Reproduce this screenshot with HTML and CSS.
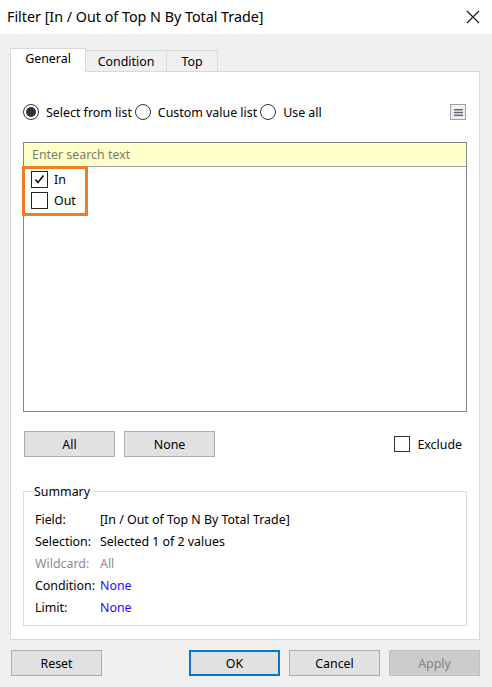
FILE: index.html
```html
<!DOCTYPE html>
<html>
<head>
<meta charset="utf-8">
<link rel="stylesheet" href="styles.css">
</head>
<body>
<div class="window">
  <div class="titlebar">
    <span class="title">Filter [In / Out of Top N By Total Trade]</span>
    <svg class="close" width="14" height="14" viewBox="0 0 14 14"><path d="M1 1L13 13M13 1L1 13" stroke="#111" stroke-width="1.1" fill="none"/></svg>
  </div>
  <div class="body">
    <div class="tabs">
      <div class="tab active">General</div>
      <div class="tab t2">Condition</div>
      <div class="tab t3">Top</div>
    </div>
    <div class="panel">
      <div class="radios">
        <span class="radio on"><span class="dot"></span></span><span class="rlabel">Select from list</span>
        <span class="radio"></span><span class="rlabel">Custom value list</span>
        <span class="radio"></span><span class="rlabel">Use all</span>
        <span class="spacer"></span>
        <span class="menu"><svg width="9" height="7" viewBox="0 0 9 7"><rect x="0" y="0" width="9" height="1.4" fill="#5b6473"/><rect x="0" y="2.8" width="9" height="1.4" fill="#5b6473"/><rect x="0" y="5.6" width="9" height="1.4" fill="#5b6473"/></svg></span>
      </div>
      <div class="listbox">
        <div class="search">Enter search text</div>
        <div class="items">
          <div class="item"><span class="cb"><svg width="13" height="13" viewBox="0 0 13 13"><path d="M2.5 6.5L5 9.5L10.5 2.5" stroke="#111" stroke-width="1.6" fill="none"/></svg></span><span class="itext">In</span></div>
          <div class="item"><span class="cb"></span><span class="itext">Out</span></div>
          <div class="highlight"></div>
        </div>
      </div>
      <div class="btnrow">
        <button class="btn">All</button>
        <button class="btn">None</button>
        <span class="spacer"></span>
        <span class="cb small"></span><span class="exlabel">Exclude</span>
      </div>
      <fieldset class="summary">
        <legend>Summary</legend>
        <div class="srow"><span class="k">Field:</span><span class="v">[In / Out of Top N By Total Trade]</span></div>
        <div class="srow"><span class="k">Selection:</span><span class="v">Selected 1 of 2 values</span></div>
        <div class="srow dim"><span class="k">Wildcard:</span><span class="v">All</span></div>
        <div class="srow"><span class="k">Condition:</span><span class="v link">None</span></div>
        <div class="srow"><span class="k">Limit:</span><span class="v link">None</span></div>
      </fieldset>
    </div>
    <div class="footer">
      <button class="btn">Reset</button>
      <span class="spacer"></span>
      <button class="btn ok">OK</button>
      <button class="btn">Cancel</button>
      <button class="btn disabled">Apply</button>
    </div>
  </div>
</div>
</body>
</html>
```
FILE: styles.css
```css
html, body {
  margin: 0;
  padding: 0;
}
body {
  width: 492px;
  height: 687px;
  background: #f0f0f0;
  font-family: "Noto Sans", "Open Sans", sans-serif;
  font-size: 12.4px;
  color: #000;
  overflow: hidden;
}
.window {
  width: 492px;
  height: 687px;
  display: flex;
  flex-direction: column;
}
.titlebar {
  height: 34px;
  background: #fff;
  display: flex;
  align-items: center;
  justify-content: space-between;
  padding: 0 12px 0 7px;
  box-sizing: border-box;
}
.title {
  font-size: 14.3px;
  color: #000;
  position: relative;
  top: -1px;
}
.close {
  display: block;
}
.body {
  padding: 14px 12px 0 10px;
}
.tabs {
  display: flex;
  align-items: flex-end;
  height: 23px;
  position: relative;
  z-index: 2;
}
.tab {
  height: 21px;
  box-sizing: border-box;
  border: 1px solid #d9d9d9;
  border-bottom: none;
  background: #f0f0f0;
  display: flex;
  align-items: center;
  justify-content: center;
}
.tab.active {
  width: 76px;
  height: 24px;
  background: #fff;
  margin-bottom: -1px;
  padding-bottom: 4px;
}
.tab.t2 {
  width: 81px;
  border-left: none;
}
.tab.t3 {
  width: 51px;
  border-left: none;
}
.panel {
  position: relative;
  background: #fff;
  border: 1px solid #d9d9d9;
  height: 569px;
  box-sizing: border-box;
  padding: 32px 12px 0 12px;
}
.radios {
  display: flex;
  align-items: center;
  height: 16px;
}
.radio {
  width: 16px;
  height: 16px;
  box-sizing: border-box;
  border: 1px solid #333;
  border-radius: 50%;
  display: flex;
  align-items: center;
  justify-content: center;
  flex-shrink: 0;
}
.radio .dot {
  width: 10px;
  height: 10px;
  border-radius: 50%;
  background: #333;
}
.rlabel {
  margin: 0 3px 0 7px;
  white-space: nowrap;
}
.spacer {
  flex: 1;
}
.menu {
  width: 16px;
  height: 16px;
  box-sizing: border-box;
  border: 1px solid #a0a0a0;
  background: #f0f0f0;
  display: flex;
  align-items: center;
  justify-content: center;
  margin-right: 1px;
}
.menu svg { display: block; }
.listbox {
  margin-top: 22px;
  height: 270px;
  border: 1px solid #828790;
  box-sizing: border-box;
  display: flex;
  flex-direction: column;
}
.search {
  height: 24px;
  background: #ffffc9;
  border-bottom: 1px solid #a0a0a0;
  box-sizing: border-box;
  color: #7c7c6c;
  padding-left: 8px;
  display: flex;
  align-items: center;
}
.items {
  position: relative;
  padding: 2px 0 0 7px;
}
.item {
  display: flex;
  align-items: center;
  height: 21px;
}
.cb {
  width: 17px;
  height: 17px;
  box-sizing: border-box;
  border: 1px solid #222;
  display: flex;
  align-items: center;
  justify-content: center;
  background: #fff;
  flex-shrink: 0;
}
.cb svg { display: block; }
.itext {
  margin-left: 6px;
  color: #000;
}
.highlight {
  position: absolute;
  left: -2px;
  top: -1px;
  width: 66px;
  height: 50px;
  box-sizing: border-box;
  border: 3px solid #f47b20;
}
.btnrow {
  margin-top: 19px;
  display: flex;
  align-items: center;
  height: 26px;
  padding-left: 1px;
}
.btn {
  width: 91px;
  height: 26px;
  box-sizing: border-box;
  border: 1px solid #adadad;
  background: #e1e1e1;
  font-family: "Noto Sans", "Open Sans", sans-serif;
  font-size: 12.4px;
  color: #000;
  padding: 0;
  margin: 0;
}
.btnrow .btn + .btn {
  margin-left: 9px;
}
.cb.small {
  width: 16px;
  height: 16px;
  border-color: #333;
}
.exlabel {
  margin: 0 5px 0 7px;
}
.summary {
  margin: 26px 0 0 0;
  padding: 8px 0 0 11px;
  border: 1px solid #dcdcdc;
  height: 143px;
  box-sizing: border-box;
  min-width: 0;
}
.summary legend {
  padding: 0 1px;
  margin-left: -2px;
}
.srow {
  display: flex;
  height: 22px;
  align-items: center;
}
.srow .k {
  width: 65px;
}
.srow.dim {
  color: #8d8d8d;
}
.link {
  color: #1a0dff;
}
.footer {
  margin-top: 10px;
  display: flex;
  padding-left: 1px;
}
.footer .btn {
  width: 91px;
}
.footer .btn + .btn {
  margin-left: 9px;
}
.btn.ok {
  border: 2px solid #0078d7;
}
.btn.disabled {
  background: #cccccc;
  border-color: #bfbfbf;
  color: #838383;
}
```
